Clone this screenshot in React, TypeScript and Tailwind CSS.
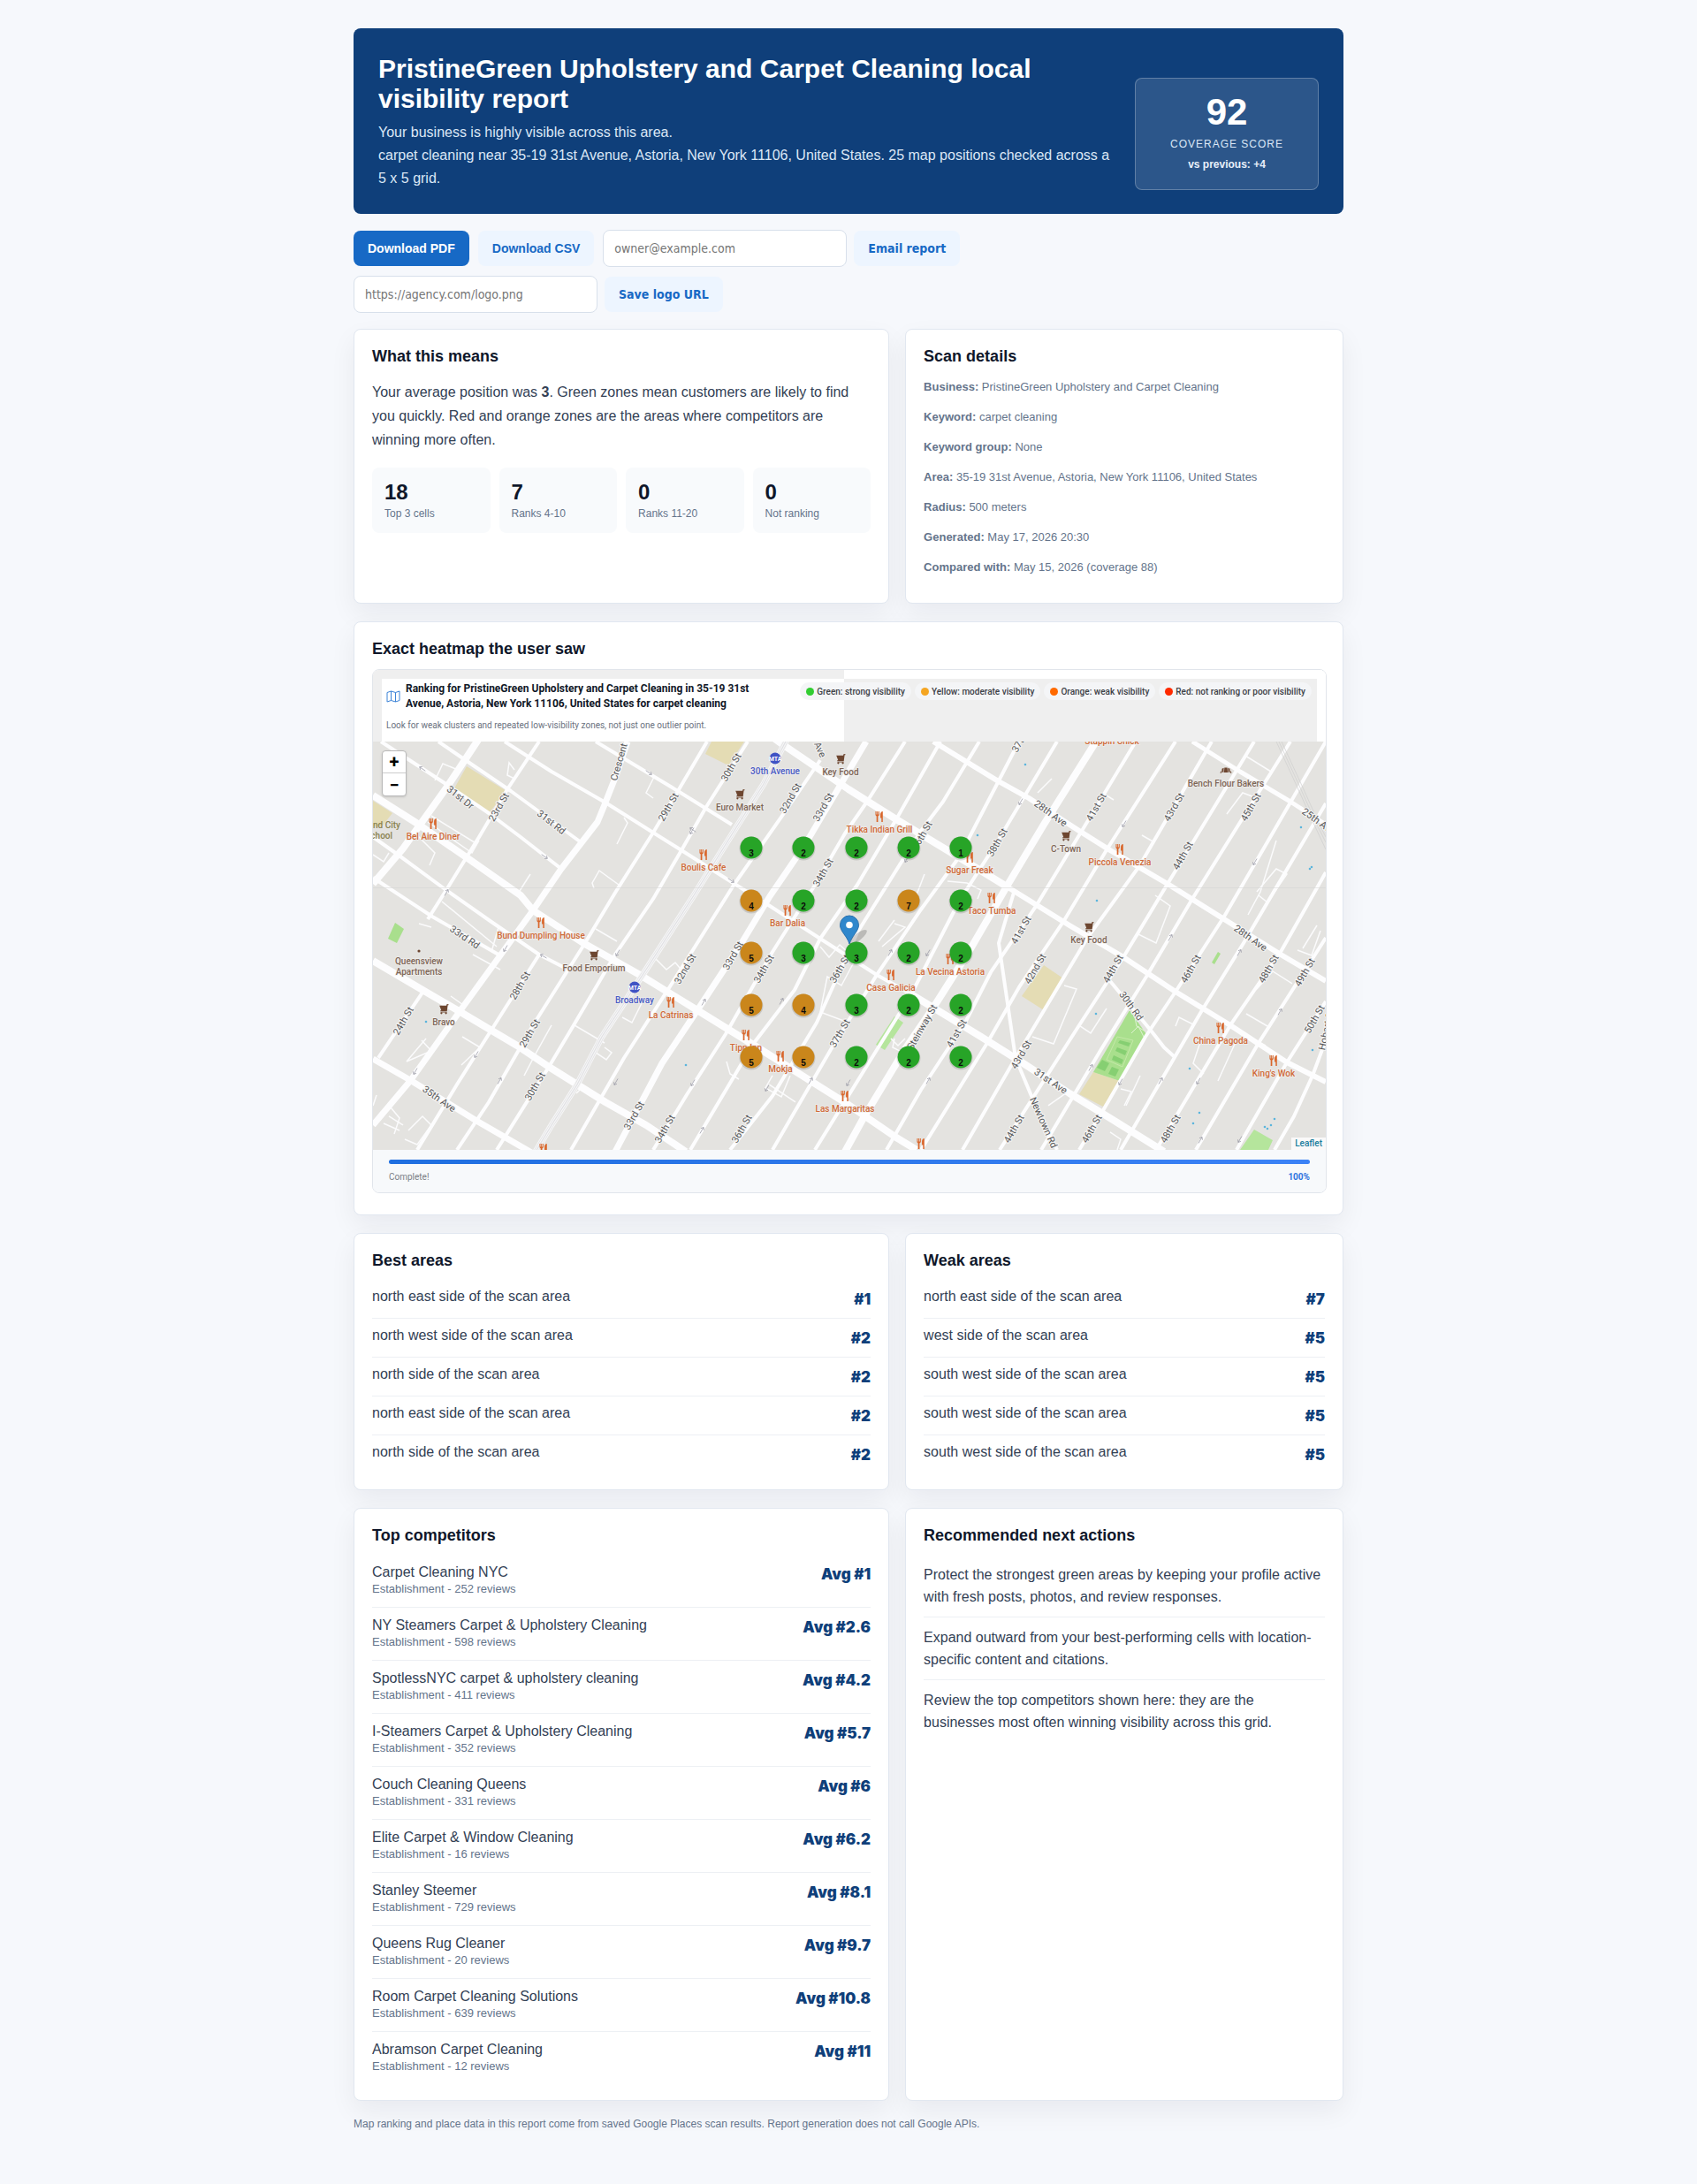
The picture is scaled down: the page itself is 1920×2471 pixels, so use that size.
import React from "react";

type Point = [number, number];

const stats = [
  { value: "18", label: "Top 3 cells" },
  { value: "7", label: "Ranks 4-10" },
  { value: "0", label: "Ranks 11-20" },
  { value: "0", label: "Not ranking" },
];

const details = [
  { label: "Business:", value: "PristineGreen Upholstery and Carpet Cleaning" },
  { label: "Keyword:", value: "carpet cleaning" },
  { label: "Keyword group:", value: "None" },
  { label: "Area:", value: "35-19 31st Avenue, Astoria, New York 11106, United States" },
  { label: "Radius:", value: "500 meters" },
  { label: "Generated:", value: "May 17, 2026 20:30" },
  { label: "Compared with:", value: "May 15, 2026 (coverage 88)" },
];

const bestAreas = [
  { name: "north east side of the scan area", rank: "#1" },
  { name: "north west side of the scan area", rank: "#2" },
  { name: "north side of the scan area", rank: "#2" },
  { name: "north east side of the scan area", rank: "#2" },
  { name: "north side of the scan area", rank: "#2" },
];

const weakAreas = [
  { name: "north east side of the scan area", rank: "#7" },
  { name: "west side of the scan area", rank: "#5" },
  { name: "south west side of the scan area", rank: "#5" },
  { name: "south west side of the scan area", rank: "#5" },
  { name: "south west side of the scan area", rank: "#5" },
];

const competitors = [
  { name: "Carpet Cleaning NYC", reviews: 252, avg: "1" },
  { name: "NY Steamers Carpet & Upholstery Cleaning", reviews: 598, avg: "2.6" },
  { name: "SpotlessNYC carpet & upholstery cleaning", reviews: 411, avg: "4.2" },
  { name: "I-Steamers Carpet & Upholstery Cleaning", reviews: 352, avg: "5.7" },
  { name: "Couch Cleaning Queens", reviews: 331, avg: "6" },
  { name: "Elite Carpet & Window Cleaning", reviews: 16, avg: "6.2" },
  { name: "Stanley Steemer", reviews: 729, avg: "8.1" },
  { name: "Queens Rug Cleaner", reviews: 20, avg: "9.7" },
  { name: "Room Carpet Cleaning Solutions", reviews: 639, avg: "10.8" },
  { name: "Abramson Carpet Cleaning", reviews: 12, avg: "11" },
];

const actions = [
  "Protect the strongest green areas by keeping your profile active with fresh posts, photos, and review responses.",
  "Expand outward from your best-performing cells with location-specific content and citations.",
  "Review the top competitors shown here: they are the businesses most often winning visibility across this grid.",
];

const legend = [
  { label: "Green: strong visibility", dot: "bg-[#32cd32]" },
  { label: "Yellow: moderate visibility", dot: "bg-[#f5a623]" },
  { label: "Orange: weak visibility", dot: "bg-[#ff6a00]" },
  { label: "Red: not ranking or poor visibility", dot: "bg-[#ff2a00]" },
];

/* ---------- Map data ---------- */

const roads: { w: number; pts: string }[] = [
  // avenues
  { w: 8, pts: "0,61 49,92 110,134 167,174 181,191 238,228 302,264 367,304 427,341 495,384 538,411 592,448 615,462" },
  { w: 8, pts: "452,-5 463,3 538,54 592,88 663,131 717,164" },
  { w: 6, pts: "717,164 788,208 849,244 908,283 970,321 1034,363 1078,385" },
  { w: 6, pts: "634,0 706,44 742,64 799,101 834,123 899,161 963,201 1027,241 1078,271" },
  { w: 5, pts: "927,0 981,34 1038,68 1078,94" },
  { w: 4, pts: "252,0 345,56 406,94" },
  { w: 4, pts: "149,0 202,34 263,69 317,103 349,123 409,161 449,186 506,223 570,264 609,286" },
  { w: 8, pts: "609,286 642,306 688,334 731,361 788,398 842,431 895,464" },
  { w: 4, pts: "74,0 109,24 156,56 238,116" },
  { w: 4, pts: "9,0 52,28 84,49 131,81 167,108 213,144" },
  { w: 4, pts: "0,108 31,130 80,166 134,204 188,241 217,256" },
  { w: 4, pts: "0,154 67,198 142,241" },
  { w: 8, pts: "0,248 56,281 99,306 163,344 199,368 231,388 263,408 309,434 354,464" },
  { w: 7, pts: "0,359 42,383 117,429 181,466" },
  // streets
  { w: 8, pts: "119,-2 84,51 34,121 0,161" },
  { w: 4, pts: "188,0 152,54 120,108 81,171 62,201" },
  { w: 7, pts: "288,0 274,41 261,74 254,91 213,144 181,191 99,304 42,384 0,434" },
  { w: 4, pts: "56,284 6,358" },
  { w: 4, pts: "188,241 131,331 95,388 50,462" },
  { w: 4, pts: "378,0 345,56 317,103 274,171 238,231 181,321 131,408 95,462" },
  { w: 4, pts: "424,0 377,74 349,123 317,178 274,241 227,321 199,368 140,462" },
  { w: 4, pts: "506,21 470,74 409,161 338,274 284,358 224,462" },
  { w: 7, pts: "558,0 488,118 449,175 417,228 367,304 327,364 274,464" },
  { w: 4, pts: "602,0 559,68 534,104 499,164 452,238 399,331 356,398 317,462" },
  { w: 4, pts: "642,0 592,88 548,162 506,223 477,281 431,341 359,462" },
  { w: 4, pts: "686,0 645,68 620,101 548,216 502,318 452,401 404,462" },
  { w: 4, pts: "731,0 663,131 620,190 570,264 520,345 452,462" },
  { w: 4, pts: "774,0 706,114 663,181 609,286 560,365 500,462" },
  { w: 8, pts: "818,0 759,94 717,164 674,238 634,301 602,348 556,424 534,464" },
  { w: 4, pts: "863,0 802,101 749,188 699,261 670,318 620,394 581,462" },
  { w: 4, pts: "908,0 831,121 781,204 731,278 695,341 620,462" },
  { w: 4, pts: "949,0 867,141 809,221 727,358 667,462" },
  { w: 4, pts: "997,0 899,161 849,244 799,321 709,462" },
  { w: 4, pts: "1038,0 927,178 875,266 824,348 756,462" },
  { w: 4, pts: "1078,0 963,198 908,283 874,334 824,421 799,462" },
  { w: 4, pts: "1078,70 985,228 938,304 846,462" },
  { w: 4, pts: "1078,148 1027,238 970,321 886,462" },
  { w: 4, pts: "1078,222 1002,341 931,462" },
  { w: 4, pts: "1078,294 1034,363 977,462" },
  { w: 4, pts: "1078,338 1063,378 1042,424 1020,462" },
  { w: 4, pts: "725,171 708,228 727,358 745,401 774,462" },
  { w: 4, pts: "834,271 881,328 895,346 906,356" },
];

const alleys = [
  "70,44 79,25 96,32", "160,32 154,24 152,38 160,42", "318,40 309,58 317,64", "276,116 288,92 284,86",
  "250,166 248,160 256,146 278,162", "62,91 112,126 120,112", "66,84 118,116", "45,101 70,126 64,140",
  "178,150 164,172", "0,128 12,136 18,126", "78,181 140,232", "134,238 142,210", "113,241 144,258",
  "52,206 66,210", "88,288 102,298", "101,334 121,346 100,366", "55,338 66,350 38,362 60,336", "202,321 183,355 171,378",
  "228,321 262,341", "262,346 270,352 264,360 252,352", "282,312 293,318 304,296", "320,246 332,258 342,250 352,262",
  "252,212 276,226", "400,362 404,376 414,382", "448,388 460,396 478,408", "452,378 444,392 462,402 472,378",
  "506,232 516,244 528,230 546,246 530,276 514,266 506,306 538,318", "752,58 768,42", "830,61 838,66",
  "870,106 884,114", "885,174 902,186 886,228 866,218 858,230", "966,82 984,58 1000,64", "987,16 1016,34",
  "1000,170 1022,144 1034,150 1012,182 1002,174", "1022,112 1004,170 990,196", "1046,236 1062,242 1072,214",
  "1052,234 1068,208", "1000,280 1018,260 1040,274", "988,308 1012,322", "982,330 1010,344", "938,334 928,364 940,376",
  "976,340 956,384", "908,322 912,312 928,320", "846,393 858,396 850,412", "782,276 796,280 770,342 746,334",
  "800,322 812,330 830,302", "764,412 784,398", "868,378 852,412", "586,336 594,344 602,336", "590,336 588,346 600,352",
  "650,158 672,160 688,168 684,178", "590,206 602,210 576,232", "572,226 590,202", "624,150 614,176",
  "8,420 20,414 30,426 24,444", "12,432 30,440", "18,424 34,434", "40,440 56,424 66,434 50,456 36,450",
  "4,400 0,412", "226,388 234,394 230,398", "834,442 846,450 842,462",
];

const rail = "469,-4 442,48 413,94 363,174 309,258 259,334 231,388 202,434 184,464";

const parks: { fill: string; pts: string }[] = [
  { fill: "#e4dcb4", pts: "106,28 151,56 131,81 92,53" },
  { fill: "#e4dcb4", pts: "383,0 420,0 402,27 376,14" },
  { fill: "#e4dcb4", pts: "0,67 22,81 10,96 0,96" },
  { fill: "#e4dcb4", pts: "759,253 781,268 759,304 734,288" },
  { fill: "#e4dcb4", pts: "815,374 845,384 826,413 799,399" },
  { fill: "#a9df8d", pts: "856,304 875,331 845,384 815,374" },
  { fill: "#b5e59c", pts: "590,311 600,318 579,349 569,343" },
  { fill: "#b5e59c", pts: "997,439 1018,451 1013,462 981,462" },
  { fill: "#a9df8d", pts: "956,238 959,240 952,252 949,250" },
  { fill: "#a9df8d", pts: "25,205 35,212 27,228 17,223" },
];

const streetLabels: [string, number, number, number][] = [
  ["31st Dr", 99, 63, 38], ["23rd St", 142, 74, -60], ["31st Rd", 202, 91, 38], ["Crescent", 278, 23, -74],
  ["29th St", 334, 74, -60], ["30th St", 405, 29, -60], ["32nd St", 472, 64, -60], ["33rd St", 509, 74, -60],
  ["34th St", 509, 148, -60], ["Ave", 506, 9, 66], ["36th St", 621, 106, -60], ["37th St", 734, -4, -60],
  ["38th St", 706, 114, -60], ["28th Ave", 767, 81, 36], ["41st St", 818, 74, -60], ["43rd St", 906, 74, -60],
  ["45th St", 993, 74, -60], ["44th St", 916, 129, -60], ["25th Ave", 1070, 90, 36], ["41st St", 733, 213, -60],
  ["42nd St", 749, 257, -60], ["44th St", 837, 257, -60], ["46th St", 925, 257, -60], ["28th Ave", 993, 222, 35],
  ["48th St", 1013, 257, -60], ["49th St", 1054, 261, -60], ["30th Rd", 858, 299, 54], ["50th St", 1065, 314, -60],
  ["Steinway St", 621, 323, -60], ["41st St", 660, 330, -60], ["43rd St", 733, 354, -60], ["31st Ave", 767, 384, 34],
  ["Newtown Rd", 759, 431, 66], ["44th St", 725, 438, -60], ["46th St", 813, 438, -60], ["48th St", 902, 438, -60],
  ["Hobart St", 1078, 326, -78], ["33rd Rd", 104, 221, 34], ["28th St", 166, 276, -60], ["24th St", 34, 316, -60],
  ["29th St", 177, 330, -60], ["30th St", 183, 390, -60], ["35th Ave", 75, 404, 35], ["32nd St", 353, 257, -60],
  ["33rd St", 407, 242, -60], ["34th St", 442, 257, -60], ["36th St", 528, 257, -60], ["33rd St", 295, 423, -60],
  ["34th St", 330, 438, -60], ["36th St", 417, 438, -60], ["37th St", 528, 330, -60],
];

type PlaceKind = "food" | "shop" | "metro" | "bakery" | "none";

const places: [string, number, number, PlaceKind][] = [
  ["Bel Aire Diner", 68, 107, "food"], ["Boulis Cafe", 374, 142, "food"], ["Euro Market", 415, 74, "shop"],
  ["Key Food", 529, 34, "shop"], ["30th Avenue", 455, 33, "metro"], ["Tikka Indian Grill", 573, 99, "food"],
  ["Sugar Freak", 675, 145, "food"], ["Taco Tumba", 700, 191, "food"], ["C-Town", 784, 121, "shop"],
  ["Piccola Venezia", 845, 136, "food"], ["Bench Flour Bakers", 965, 47, "bakery"], ["Stappin Chick", 836, -1, "food"],
  ["Key Food", 810, 224, "shop"], ["La Vecina Astoria", 653, 260, "food"], ["Casa Galicia", 586, 278, "food"],
  ["China Pagoda", 959, 338, "food"], ["King's Wok", 1019, 375, "food"], ["", 620, 469, "food"],
  ["Bund Dumpling House", 190, 219, "food"], ["Food Emporium", 250, 256, "shop"], ["Broadway", 296, 292, "metro"],
  ["La Catrinas", 337, 309, "food"], ["Bravo", 80, 317, "shop"], ["Queensview", 52, 248, "none"],
  ["Apartments", 52, 260, "none"], ["Tipp Inn", 422, 346, "food"], ["Mokja", 461, 370, "food"],
  ["Bar Dalia", 469, 205, "food"], ["Las Margaritas", 534, 415, "food"], ["", 193, 475, "food"],
];

const placeColor: Record<PlaceKind, string> = {
  food: "#cf6a38",
  shop: "#7d6556",
  metro: "#4a5bc4",
  bakery: "#7d6556",
  none: "#7d6556",
};

const drops: Point[] = [
  [738, 26], [684, 106], [1050, 97], [1060, 144], [1062, 142], [819, 180], [818, 308], [924, 370], [935, 420],
  [928, 432], [1063, 349], [1020, 427], [1016, 434], [1012, 438], [1009, 436], [354, 366], [60, 317],
];

const arrows: [number, number, number][] = [
  [56, 31, -145], [194, 130, 35], [312, 35, 35], [362, 100, 215], [361, 101, 120], [405, 157, 35], [83, 171, -60],
  [150, 234, 120], [193, 243, 210], [277, 239, 120], [48, 373, 120], [117, 354, 120], [143, 384, -60], [275, 385, 120],
  [374, 295, -60], [462, 294, -60], [362, 386, 120], [372, 440, -60], [446, 392, 120], [495, 384, -60], [538, 386, 120],
  [733, 68, 120], [850, 93, 120], [998, 136, 120], [585, 239, -60], [628, 239, 120], [902, 222, -60], [980, 239, -60],
  [1026, 306, -60], [812, 369, -60], [846, 385, 120], [891, 384, -60], [934, 384, 120], [936, 451, -60], [981, 450, 120],
  [628, 384, -60], [604, 133, 120],
];

const gridX = [428, 487, 547, 606, 665];
const gridY = [120, 180, 239, 298, 357];
const ranks = [
  [3, 2, 2, 2, 1],
  [4, 2, 2, 7, 2],
  [5, 3, 3, 2, 2],
  [5, 4, 3, 2, 2],
  [5, 5, 2, 2, 2],
];

function PlaceIcon({ kind, x, y }: { kind: PlaceKind; x: number; y: number }) {
  if (kind === "food") {
    return (
      <g transform={`translate(${x - 5} ${y - 6})`} fill="#d9662b">
        <path d="M0.5 0h1v3.4h.7V0h1v3.4h.7V0h.9v4.2L3.4 5.4V12H1.7V5.4L.5 4.2z" />
        <path d="M8.8 0v12H7.3V7.4H6.1V3.2C6.1 1.4 7.3.2 8.8 0z" />
      </g>
    );
  }
  if (kind === "shop") {
    return (
      <g transform={`translate(${x - 5} ${y - 6})`} fill="#6d4630">
        <path d="M10.4 0v1.2H9.6L8.7 8.2H1.2V7.3h1.1L.2 1.8h7.9L8.4.2z" />
        <circle cx="2.4" cy="10.3" r="1.1" />
        <circle cx="7.6" cy="10.3" r="1.1" />
        <path d="M1.6 8.8h7v.7h-7z" />
      </g>
    );
  }
  if (kind === "metro") {
    return (
      <g>
        <circle cx={x} cy={y} r="6.5" fill="#3f52c4" />
        <text x={x} y={y + 3} fontSize="7" fontWeight="700" fill="#fff" textAnchor="middle">
          MTA
        </text>
      </g>
    );
  }
  if (kind === "bakery") {
    return (
      <g fill="#6d4630">
        <path d={`M${x - 1.6} ${y - 3.5}h3.2l.6 5.5h-4.4z`} />
        <path d={`M${x - 4.4} ${y - 2.2}l2-1-.2 5h-2z`} />
        <path d={`M${x + 4.4} ${y - 2.2}l-2-1 .2 5h2z`} />
        <path d={`M${x - 6.5} ${y + 2.6}l1-2.8.6 3z M${x + 6.5} ${y + 2.6}l-1-2.8-.6 3z`} />
      </g>
    );
  }
  return null;
}

function HeatMap() {
  return (
    <svg
      viewBox="0 0 1078 462"
      className="block w-full h-auto bg-[#e4e3e0] font-[Roboto,sans-serif]"
      role="img"
      aria-label="Ranking heatmap of Astoria, New York"
    >
      {parks.map((p) => (
        <polygon key={p.pts} points={p.pts} fill={p.fill} />
      ))}

      <g fill="none" stroke="#fbfbfc" strokeWidth="1.5">
        {alleys.map((pts) => (
          <polyline key={pts} points={pts} />
        ))}
      </g>

      <g fill="none" stroke="#fdfdfe" strokeLinejoin="round">
        {roads.map((r) => (
          <polyline key={r.pts} points={r.pts} strokeWidth={r.w} />
        ))}
      </g>

      {/* Elevated rail line */}
      <g fill="none">
        <polyline points={rail} stroke="#f6f6f7" strokeWidth="7" />
        <polyline points={rail} stroke="#e3e3e4" strokeWidth="5" />
        <polyline points={rail} stroke="#f6f6f7" strokeWidth="3.4" />
        <polyline points={rail} stroke="#e0e0e3" strokeWidth="1.2" />
      </g>
      <g fill="none" stroke="#cfcfcf" strokeWidth="0.7">
        <path d="M1022 0 L1046 52 L1064 92 L1078 122" />
        <path d="M1025 0 L1049 52 L1067 92 L1078 114" />
        <path d="M1028 0 L1052 52 L1070 92 L1078 108" />
      </g>
      <path d="M0 165.500H1078" stroke="#d3d3d3" strokeWidth="0.5" />

      {/* Sports field inside the park */}
      <g fill="none" stroke="#c4e8a8" strokeWidth="1">
        <path d="M842 334l18 4-12 30-18-8z" />
        <path d="M862 312l2 10 10 6M858 330l8-8 6 12" stroke="#dff2d2" />
      </g>
      <g fill="#86cf72">
        <path d="M845 338l12 3-2 4-12-4zM842 346l11 4-2 5-11-5zM838 355l11 5-2 5-11-5zM825 360l8 4-5 9-9-4zM836 368l8 3-4 8-8-3z" />
      </g>
      <g fill="#5bb5dc">
        {drops.map(([x, y]) => (
          <circle key={`${x}-${y}`} cx={x} cy={y} r="1.3" />
        ))}
      </g>
      <g fill="none" stroke="#9a9aa6" strokeWidth="0.7">
        {arrows.map(([x, y, a]) => (
          <path key={`${x}-${y}`} d="M-4 0H4M1.500-2L4 0L1.500 2" transform={`translate(${x} ${y}) rotate(${a})`} />
        ))}
      </g>

      <g fontSize="11" fill="#58585a" textAnchor="middle" stroke="#f4f4f3" strokeWidth="2" paintOrder="stroke">
        {streetLabels.map(([text, x, y, a]) => (
          <text key={`${x}-${y}`} transform={`translate(${x} ${y}) rotate(${a})`} y="4">
            {text}
          </text>
        ))}
      </g>

      {places.map(([text, x, y, kind]) => (
        <g key={`${x}-${y}`}>
          <PlaceIcon kind={kind} x={x} y={y - 14} />
          <text
            x={x}
            y={y + 4}
            fontSize="10"
            fontWeight="500"
            fill={placeColor[kind]}
            textAnchor="middle"
            stroke="#efeeec"
            strokeWidth="1.5"
            paintOrder="stroke"
          >
            {text}
          </text>
        </g>
      ))}
      <circle cx="52" cy="237" r="1.6" fill="#6d4630" />
      <g fontSize="10" fontWeight="500" fill="#8a8250" textAnchor="end">
        <text x="31" y="98">Island City</text>
        <text x="22" y="110">School</text>
      </g>

      {/* Business pin */}
      <ellipse cx="549" cy="221" rx="12" ry="4" fill="#000" opacity="0.18" transform="rotate(-38 549 221)" />
      <path
        d="M539 229C536.500 220 528.500 215 528.500 207.500a10.500 10.500 0 0 1 21 0C549.500 215 541.500 220 539 229z"
        fill="#2f87cc"
        stroke="#2a6fab"
        strokeWidth="1"
      />
      <circle cx="539" cy="207.500" r="3.800" fill="#fff" />

      {ranks.map((row, r) =>
        row.map((rank, c) => (
          <g key={`${r}-${c}`}>
            <circle cx={gridX[c]} cy={gridY[r] + 1} r="13.500" fill="#000" opacity="0.12" />
            <circle cx={gridX[c]} cy={gridY[r]} r="12.500" fill={rank > 3 ? "#ca861b" : "#27a427"} />
            <text
              x={gridX[c]}
              y={gridY[r] + 10}
              fontSize="10"
              fontWeight="700"
              fill="#0b0b0b"
              textAnchor="middle"
              className="font-['Liberation_Sans',sans-serif]"
            >
              {rank}
            </text>
          </g>
        ))
      )}
    </svg>
  );
}

function Card({ title, children }: { title: string; children: React.ReactNode }) {
  return (
    <section className="bg-white border border-[#e1e7f0] rounded-lg p-5 shadow-[0_12px_30px_rgba(15,23,42,0.06)]">
      <h2 className="text-lg leading-[21px] font-bold text-[#0f172a]">{title}</h2>
      {children}
    </section>
  );
}

function RankList({ items }: { items: { name: string; rank: string }[] }) {
  return (
    <ul className="mt-[11px]">
      {items.map((item, i) => (
        <li
          key={i}
          className="flex justify-between gap-4 pt-[10px] pb-[9px] border-b border-[#edf0f4] last:border-b-0 last:pb-[7px]"
        >
          <span className="leading-[18px]">{item.name}</span>
          <Rank>{item.rank}</Rank>
        </li>
      ))}
    </ul>
  );
}

function Rank({ children }: { children: React.ReactNode }) {
  return (
    <strong className="shrink-0 font-['Arial_Black',Inter,sans-serif] text-[17px] leading-6 font-black text-[#0f3f7a]">
      {children}
    </strong>
  );
}

export default function App() {
  return (
    <main className="min-h-screen bg-[#f6f8fc] px-5 pt-8 pb-16 font-['Liberation_Sans',Arial,sans-serif] text-base text-[#334155]">
      <div className="max-w-[1120px] mx-auto">
        <header className="flex items-end justify-between gap-6 bg-[#0f3f7a] text-white rounded-lg px-7 pt-[29px] pb-[27px]">
          <div className="flex-1">
            <h1 className="text-3xl leading-[34px] font-bold mb-2">
              PristineGreen Upholstery and Carpet Cleaning local visibility report
            </h1>
            <p className="leading-[26px] text-[#dbe7f6]">Your business is highly visible across this area.</p>
            <p className="leading-[26px] text-[#dbe7f6]">
              carpet cleaning near 35-19 31st Avenue, Astoria, New York 11106, United States. 25 map positions checked
              across a 5 x 5 grid.
            </p>
          </div>
          <div className="w-52 shrink-0 text-center bg-white/12 border border-white/25 rounded-lg px-4 pt-4 pb-5">
            <div className="text-[42px] leading-[44px] font-bold">92</div>
            <div className="mt-[5px] text-xs leading-[18px] tracking-[1px] uppercase text-[#dbe7f6]">Coverage score</div>
            <div className="mt-[6px] text-xs leading-4 font-bold text-[#e8f0fa]">vs previous: +4</div>
          </div>
        </header>

        {/* Export actions */}
        <div className="mt-[18px] flex flex-wrap items-center gap-[10px] text-sm">
          <a href="#pdf" className="h-10 px-4 rounded-lg bg-[#1769c5] text-white font-bold leading-10">
            Download PDF
          </a>
          <a href="#csv" className="h-10 px-4 rounded-lg bg-[#edf5ff] text-[#1769c5] font-bold leading-10">
            Download CSV
          </a>
          <form
            className="flex items-center gap-2 font-[Tahoma,'DejaVu_Sans_Condensed','Noto_Sans',sans-serif]"
            onSubmit={(e) => e.preventDefault()}
          >
            <input
              type="email"
              aria-label="Owner email"
              placeholder="owner@example.com"
              className="w-[276px] h-[42px] px-3 bg-white border border-[#d8e0eb] rounded-lg placeholder:text-[#757575]"
            />
            <button type="submit" className="h-10 px-4 rounded-lg bg-[#edf5ff] text-[#1769c5] font-bold">
              Email report
            </button>
          </form>
        </div>
        <form
          className="mt-[10px] flex items-center gap-2 text-sm font-[Tahoma,'DejaVu_Sans_Condensed','Noto_Sans',sans-serif]"
          onSubmit={(e) => e.preventDefault()}
        >
          <input
            type="url"
            aria-label="Logo URL"
            placeholder="https://agency.com/logo.png"
            className="w-[276px] h-[42px] px-3 bg-white border border-[#d8e0eb] rounded-lg placeholder:text-[#757575]"
          />
          <button type="submit" className="h-10 px-4 rounded-lg bg-[#edf5ff] text-[#1769c5] font-bold">
            Save logo URL
          </button>
        </form>

        <div className="mt-[18px] grid grid-cols-1 md:grid-cols-[11fr_9fr] gap-x-[18px] gap-y-5">
          <Card title="What this means">
            <p className="mt-4 leading-[27px]">
              Your average position was <strong>3</strong>. Green zones mean customers are likely to find you quickly.
              Red and orange zones are the areas where competitors are winning more often.
            </p>
            <div className="mt-[18px] grid grid-cols-4 gap-[10px]">
              {stats.map((s) => (
                <div key={s.label} className="bg-[#f8fafc] rounded-lg px-[14px] pt-[14px] pb-3">
                  <div className="text-2xl leading-7 font-bold text-[#0f172a]">{s.value}</div>
                  <div className="text-xs leading-5 text-[#64748b]">{s.label}</div>
                </div>
              ))}
            </div>
          </Card>

          <Card title="Scan details">
            <div className="mt-[13px] pb-[10px] flex flex-col gap-[13px] text-[13px] leading-[21px] text-[#64748b]">
              {details.map((d) => (
                <p key={d.label}>
                  <strong>{d.label}</strong> {d.value}
                </p>
              ))}
            </div>
          </Card>

          <div className="md:col-span-2">
            <Card title="Exact heatmap the user saw">
              <div className="mt-3 mb-1 -mr-[2px] border border-[#e1e5eb] rounded-lg overflow-hidden font-[Roboto,sans-serif]">
                <div className="grid grid-cols-[533fr_545fr] h-[81px]">
                  <div className="bg-white border-t-10 border-l-10 border-[#efefef] pl-[5px] pt-[3px]">
                    <div className="flex items-center gap-[6px]">
                      <svg viewBox="0 0 16 14" className="w-4 h-[14px] shrink-0" fill="none" stroke="#3b82d6" strokeWidth="1">
                        <path d="M1 2.500L5.500 1v10.500L1 13zM5.500 1L10.500 2.500V13L5.500 11.500M10.500 2.500L15 1v10.500L10.500 13" />
                      </svg>
                      <p className="max-w-[400px] text-xs leading-[17px] font-bold text-[#111827]">
                        Ranking for PristineGreen Upholstery and Carpet Cleaning in 35-19 31st Avenue, Astoria, New York
                        11106, United States for carpet cleaning
                      </p>
                    </div>
                    <p className="mt-2 text-[10px] leading-4 text-[#6b7280]">
                      Look for weak clusters and repeated low-visibility zones, not just one outlier point.
                    </p>
                  </div>
                  <ul className="flex items-start justify-end gap-1 bg-[#efefef] border-t-10 border-r-10 border-white pt-1 pr-[6px]">
                    {legend.map((l) => (
                      <li
                        key={l.label}
                        className="flex items-center gap-[3px] shrink-0 h-5 px-[7px] rounded-full bg-[#f4f5f7] text-[10px] font-medium text-[#3d4147]"
                      >
                        <span className={`size-[9px] rounded-full ${l.dot}`} />
                        {l.label}
                      </li>
                    ))}
                  </ul>
                </div>

                <div className="relative">
                  <HeatMap />
                  <div className="absolute left-[10px] top-[10px] flex flex-col w-7 rounded-sm border border-[#b9b9b9] bg-white text-black text-xl font-bold shadow-sm">
                    <button type="button" aria-label="Zoom in" className="h-[25px] leading-6 border-b border-[#cccccc]">
                      +
                    </button>
                    <button type="button" aria-label="Zoom out" className="h-[25px] leading-6">
                      −
                    </button>
                  </div>
                  <a
                    href="#leaflet"
                    className="absolute right-0 bottom-0 h-[14px] px-1 bg-white/80 text-[10px] leading-[14px] font-medium text-[#1a7d9c]"
                  >
                    Leaflet
                  </a>
                </div>

                <div className="h-12 px-[18px] pt-[11px] bg-[#f7f9fb]">
                  <div className="h-[5px] rounded-full bg-linear-to-r from-[#1f6fe0] to-[#3b82f6]" />
                  <div className="mt-[7px] flex justify-between text-[10px] leading-4 text-[#7b7f86]">
                    <span>Complete!</span>
                    <span className="font-bold text-[#2f74e0]">100%</span>
                  </div>
                </div>
              </div>
            </Card>
          </div>

          <Card title="Best areas">
            <RankList items={bestAreas} />
          </Card>
          <Card title="Weak areas">
            <RankList items={weakAreas} />
          </Card>

          <Card title="Top competitors">
            <ul className="mt-[11px]">
              {competitors.map((c) => (
                <li
                  key={c.name}
                  className="flex justify-between gap-4 pt-[10px] pb-3 border-b border-[#edf0f4] last:border-b-0 last:pb-[10px]"
                >
                  <div>
                    <div className="leading-5">{c.name}</div>
                    <div className="text-[13px] leading-[17px] text-[#64748b]">Establishment - {c.reviews} reviews</div>
                  </div>
                  <Rank>Avg #{c.avg}</Rank>
                </li>
              ))}
            </ul>
          </Card>

          <Card title="Recommended next actions">
            <ul className="mt-[11px]">
              {actions.map((a) => (
                <li key={a} className="py-[10px] leading-[25px] border-b border-[#edf0f4] last:border-b-0">
                  {a}
                </li>
              ))}
            </ul>
          </Card>
        </div>

        <footer className="mt-4 text-xs leading-5 text-[#64748b]">
          Map ranking and place data in this report come from saved Google Places scan results. Report generation does
          not call Google APIs.
        </footer>
      </div>
    </main>
  );
}
